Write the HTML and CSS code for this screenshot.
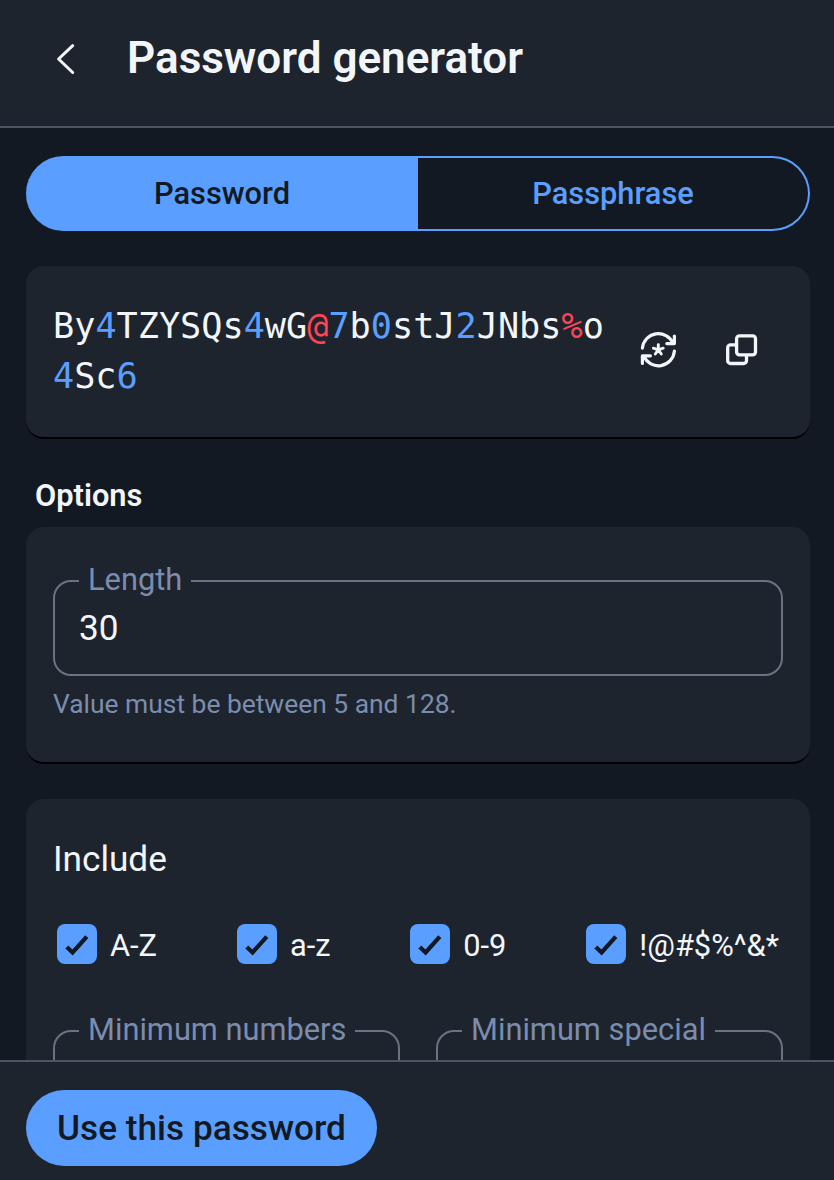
FILE: index.html
```
<!DOCTYPE html>
<html lang="en">
<head>
<meta charset="utf-8">
<title>Password generator</title>
<link rel="stylesheet" href="styles.css">
</head>
<body>
<svg class="defs" width="0" height="0" aria-hidden="true">
  <symbol id="check" viewBox="0 0 40 40"><path d="M9.800 23 15.600 28.500 29.800 12.600" fill="none" stroke="currentColor" stroke-width="4.200"/></symbol>
</svg>
<div class="popup">
  <header class="header">
    <svg class="back" viewBox="0 0 24 36"><path d="M19.700 4.700 5.600 18 19.700 31.500" fill="none" stroke="currentColor" stroke-width="3" stroke-linecap="round" stroke-linejoin="round"/></svg>
    <h1 class="title">Password generator</h1>
  </header>
  <main class="content">
    <div class="tabs">
      <button class="tab tab-active">Password</button>
      <button class="tab">Passphrase</button>
    </div>
    <section class="card generated">
      <div class="password">By<span class="num">4</span>TZYSQs<span class="num">4</span>wG<span class="special">@</span><span class="num">7</span>b<span class="num">0</span>stJ<span class="num">2</span>JNbs<span class="special">%</span>o<span class="num">4</span>Sc<span class="num">6</span></div>
      <div class="actions">
        <svg class="icon" viewBox="0 0 52 52" fill="none" stroke="currentColor" stroke-width="3.200" stroke-linecap="round" stroke-linejoin="round">
          <path d="M8.400 24.200A16 16 0 0 1 39 19.200M40.400 12V19.600H32.800"/>
          <path d="M40.400 27.200A16 16 0 0 1 9.800 32.200M8.400 39.400V31.800H16.400"/>
          <path d="M24.300 25.800V20.600M24.300 25.800 29.200 24.200M24.300 25.800 27.300 30M24.300 25.800 21.300 30M24.300 25.800 19.400 24.200" stroke-width="2.900"/>
        </svg>
        <svg class="icon" viewBox="0 0 52 52" fill="none" stroke="currentColor" stroke-width="3.300" stroke-linejoin="round">
          <rect x="19.600" y="11.900" width="18.900" height="18.900" rx="2.800"/>
          <path d="M19.600 20.800H13.500A2.800 2.800 0 0 0 10.700 23.600V36.700A2.800 2.800 0 0 0 13.500 39.500H26.700A2.800 2.800 0 0 0 29.500 36.700V31"/>
        </svg>
      </div>
    </section>
    <h2 class="heading">Options</h2>
    <section class="card length">
      <fieldset class="field">
        <legend>Length</legend>
        <div class="value">30</div>
      </fieldset>
      <p class="hint">Value must be between 5 and 128.</p>
    </section>
    <section class="card include">
      <h3 class="subheading">Include</h3>
      <div class="checks">
        <label class="check"><svg class="box"><use href="#check"/></svg><span>A-Z</span></label>
        <label class="check"><svg class="box"><use href="#check"/></svg><span>a-z</span></label>
        <label class="check"><svg class="box"><use href="#check"/></svg><span>0-9</span></label>
        <label class="check"><svg class="box"><use href="#check"/></svg><span>!@#$%^&amp;*</span></label>
      </div>
      <div class="minimums">
        <fieldset class="field"><legend>Minimum numbers</legend></fieldset>
        <fieldset class="field"><legend>Minimum special</legend></fieldset>
      </div>
    </section>
  </main>
  <footer class="footer"><button class="primary">Use this password</button></footer>
</div>
</body>
</html>
```
FILE: styles.css
```
* { box-sizing: border-box; }
body { margin: 0; background: #121922; color: #f3f6f9; font-family: Roboto, sans-serif; }
h1, h2, h3, p { margin: 0; }
button { font-family: inherit; border: 0; padding: 0; }
.defs { display: none; }
.popup { height: 1180px; display: flex; flex-direction: column; overflow: hidden; }
.header { height: 128px; flex: none; display: flex; padding: 31px 0 0 53px; background: #1e242d; border-bottom: 2px solid #4b5563; }
.back { width: 24px; height: 36px; margin-top: 10px; }
.title { margin: 1px 0 0 50px; font-size: 44px; line-height: 52px; font-weight: 600; white-space: nowrap; }
.content { flex: 1; min-height: 0; overflow: hidden; padding: 28px 24px 0 26px; }
.tabs { display: grid; grid-template-columns: 1fr 1fr; height: 75px; }
.tab { border: 2px solid #5a9fff; border-left: 0; border-radius: 0 38px 38px 0; background: transparent; color: #5a9fff; font-size: 30.8px; font-weight: 500; }
.tab-active { border-radius: 38px 0 0 38px; background: #5a9fff; color: #121922; padding-left: 2px; }
.card { background: #1e242d; border-bottom: 2px solid #000; border-radius: 18px; padding: 0 27px; }
.generated { margin-top: 35px; height: 173px; display: flex; padding-top: 35px; }
.password { width: 554px; font: 35.2px/50px "DejaVu Sans Mono", monospace; word-break: break-all; }
.num { color: #5a9fff; }
.special { color: #ff4455; }
.actions { display: flex; gap: 31px; padding: 23px 0 0 27px; }
.icon { width: 52px; height: 52px; }
.heading { margin: 37px 0 11px 9px; font-size: 30.8px; line-height: 40px; font-weight: 600; }
.length { height: 237px; padding-top: 34px; }
.field { margin: 0; height: 115px; min-width: 0; border: 2px solid #6b7280; border-radius: 18px; padding: 0 24px; }
.field legend { padding: 0 9px 2px; font-size: 30.8px; line-height: 38px; color: #7b8dae; white-space: nowrap; }
.value { font-size: 35.2px; line-height: 40px; margin-top: 7px; }
.hint { margin-top: 12px; font-size: 26.4px; line-height: 32px; color: #7b8dae; }
.include { margin-top: 35px; height: 400px; padding-top: 38px; }
.subheading { font-size: 35.2px; line-height: 44px; font-weight: 400; }
.checks { display: flex; justify-content: space-between; margin-top: 43px; padding: 0 4px; }
.check { display: flex; align-items: center; gap: 13px; height: 40px; font-size: 30.8px; line-height: 36px; white-space: nowrap; }
.check span { padding-top: 4px; }
.box { width: 40px; height: 40px; flex: none; border-radius: 8px; background: #5a9fff; color: #121922; }
.minimums { display: grid; grid-template-columns: 1fr 1fr; gap: 36px; margin-top: 47px; }
.footer { height: 120px; flex: none; background: #1e242d; border-top: 2px solid #4b5563; padding: 28px 26px 0; }
.primary { display: block; width: 351px; height: 76px; border-radius: 38px; background: #5a9fff; color: #121922; font-size: 35.2px; font-weight: 500; }
```
